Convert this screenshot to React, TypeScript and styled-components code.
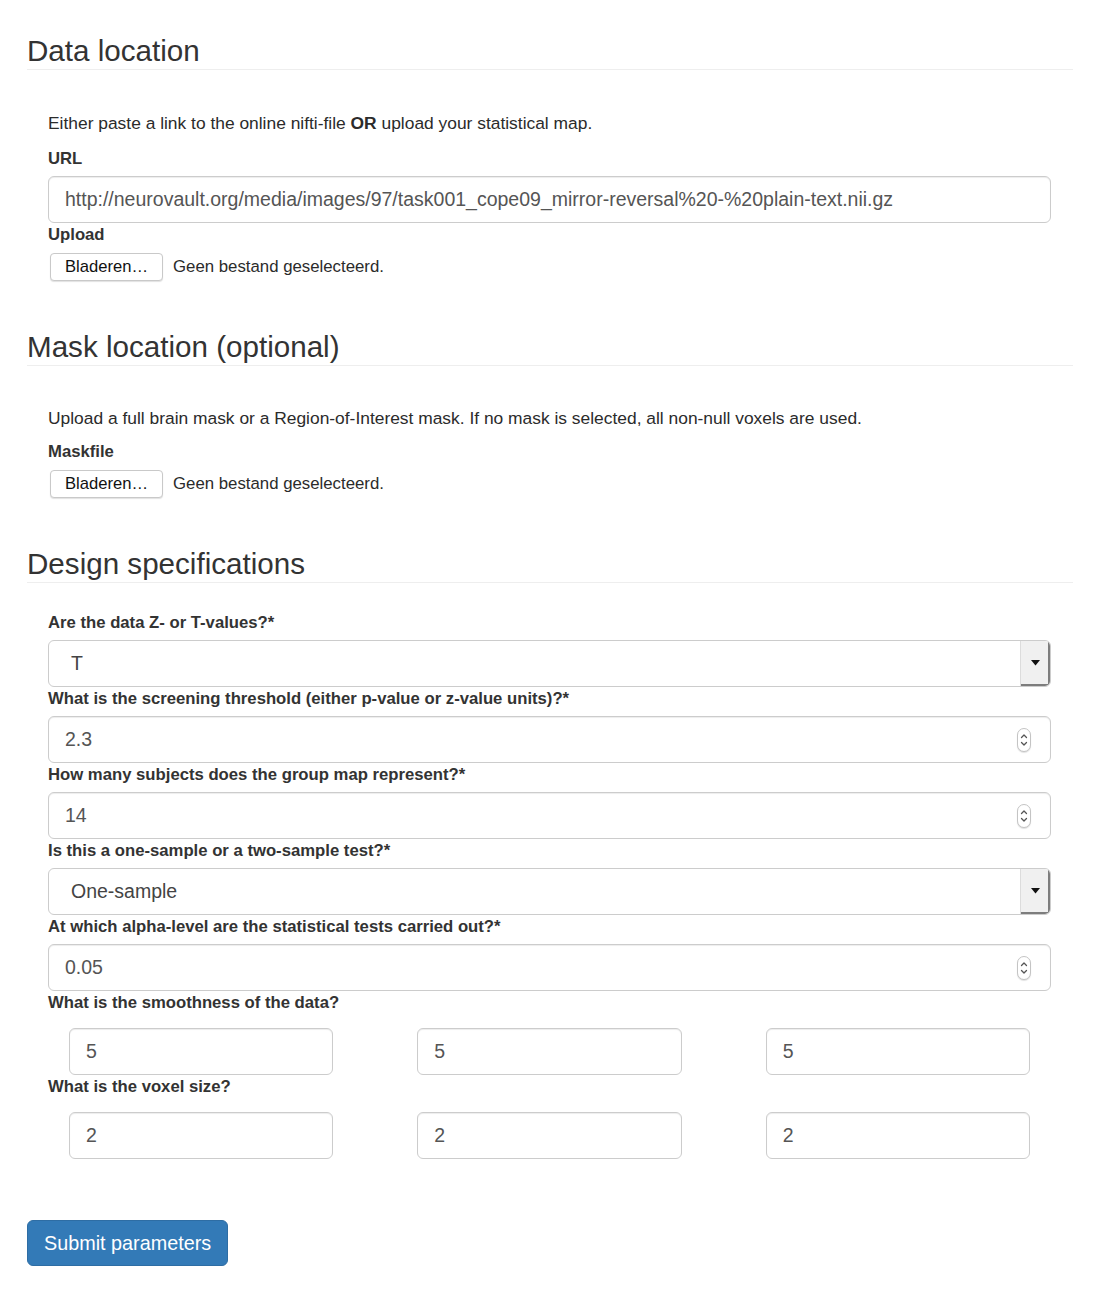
import React from "react";
import styled, { createGlobalStyle } from "styled-components";

const GlobalStyle = createGlobalStyle`
  html, body {
    margin: 0;
    padding: 0;
    background: #ffffff;
  }
  body {
    font-family: "Liberation Sans", Arial, Helvetica, sans-serif;
    color: #333333;
  }
  * { box-sizing: border-box; }
`;

const Page = styled.div`
  padding: 34px 32px 50px 27px;
`;

const Section = styled.section<{ $first?: boolean }>`
  margin-top: ${(p) => (p.$first ? "0" : "47px")};
`;

const SectionTitle = styled.h2`
  margin: 0;
  font-size: 29.6px;
  font-weight: 400;
  line-height: 33px;
  color: #333333;
  padding-bottom: 2px;
  border-bottom: 1px solid #eeeeee;
`;

const FormBody = styled.div<{ $top: number }>`
  padding: ${(p) => p.$top}px 22px 0 21px;
`;

const Intro = styled.p<{ $after: number }>`
  margin: 14px 0 ${(p) => p.$after}px;
  font-size: 17.4px;
  line-height: 22px;
  color: #2b2b2b;
  strong { font-weight: 700; }
`;

const FieldLabel = styled.label`
  display: block;
  margin: 0 0 7px;
  font-size: 16.7px;
  line-height: 21px;
  font-weight: 700;
  color: #333333;
`;

const TextInput = styled.input`
  display: block;
  width: 100%;
  height: 47px;
  margin: 0 0 1px;
  padding: 0 16px;
  font-family: "Liberation Sans", Arial, sans-serif;
  font-size: 19.5px;
  color: #555555;
  background: #ffffff;
  border: 1px solid #cccccc;
  border-radius: 6px;
  box-shadow: inset 0 1px 1px rgba(0, 0, 0, 0.075);
  outline: none;
`;

const FileRow = styled.div`
  display: flex;
  align-items: center;
  gap: 10px;
  padding: 1px 0 2px 2px;
`;

const FileButton = styled.button`
  height: 28px;
  padding: 0 14px;
  font-family: "Liberation Sans", Arial, sans-serif;
  font-size: 16.6px;
  color: #111111;
  background: #ffffff;
  border: 1px solid #c9c9c9;
  border-radius: 4px;
  box-shadow: 0 1px 1px rgba(0, 0, 0, 0.12);
`;

const FileStatus = styled.span`
  font-size: 16.8px;
  color: #2b2b2b;
`;

const SelectBox = styled.div`
  display: flex;
  height: 47px;
  margin: 0 0 1px;
  background: #ffffff;
  border: 1px solid #cccccc;
  border-radius: 6px;
  overflow: hidden;
`;

const SelectValue = styled.div`
  flex: 1;
  display: flex;
  align-items: center;
  padding-left: 22px;
  font-size: 19.5px;
  color: #444444;
`;

const SelectArrow = styled.div`
  width: 30px;
  display: flex;
  align-items: center;
  justify-content: center;
  background: #f0f0f0;
  border-left: 1px solid #dcdcdc;
  box-shadow: inset -2px -2px 0 #7d7d7d;
`;

const NumberWrap = styled.div`
  position: relative;
`;

const Spinner = styled.span`
  position: absolute;
  right: 20px;
  top: 50%;
  transform: translateY(-50%);
  width: 14px;
  height: 24px;
  border: 1px solid #c4c4c4;
  border-radius: 7px;
  background: #ffffff;
  box-shadow: 0 1px 1px rgba(0, 0, 0, 0.12);
  display: flex;
  align-items: center;
  justify-content: center;
`;

const TripleRow = styled.div`
  display: grid;
  grid-template-columns: repeat(3, 1fr);
  gap: 84px;
  padding: 8px 21px 0;
`;

const SubmitButton = styled.button`
  margin-top: 60px;
  height: 46px;
  padding: 0 16px;
  font-family: "Liberation Sans", Arial, sans-serif;
  font-size: 19.8px;
  color: #ffffff;
  background: #337ab7;
  border: 1px solid #2e6da4;
  border-radius: 6px;
`;

const SpinnerIcon = () => (
  <svg width="10" height="20" viewBox="0 0 10 20" aria-hidden="true">
    <path d="M2.5 7.5 L5 5 L7.5 7.5" fill="none" stroke="#555" strokeWidth="1.3" strokeLinecap="round" strokeLinejoin="round" />
    <path d="M2.5 12.5 L5 15 L7.5 12.5" fill="none" stroke="#555" strokeWidth="1.3" strokeLinecap="round" strokeLinejoin="round" />
  </svg>
);

const Caret = () => (
  <svg width="9" height="6" viewBox="0 0 9 6" aria-hidden="true" style={{ marginTop: -2 }}>
    <path d="M0 0 H9 L4.5 5.5 Z" fill="#111" />
  </svg>
);

const Select = ({ value }: { value: string }) => (
  <SelectBox>
    <SelectValue>{value}</SelectValue>
    <SelectArrow>
      <Caret />
    </SelectArrow>
  </SelectBox>
);

const NumberField = ({ value }: { value: string }) => (
  <NumberWrap>
    <TextInput type="text" defaultValue={value} readOnly />
    <Spinner>
      <SpinnerIcon />
    </Spinner>
  </NumberWrap>
);

const FileField = () => (
  <FileRow>
    <FileButton type="button">Bladeren…</FileButton>
    <FileStatus>Geen bestand geselecteerd.</FileStatus>
  </FileRow>
);

export default function App() {
  return (
    <>
      <GlobalStyle />
      <Page>
        <Section $first>
          <SectionTitle>Data location</SectionTitle>
          <FormBody $top={28}>
            <Intro $after={14}>
              Either paste a link to the online nifti-file <strong>OR</strong> upload your statistical map.
            </Intro>
            <FieldLabel>URL</FieldLabel>
            <TextInput
              type="text"
              readOnly
              defaultValue="http://neurovault.org/media/images/97/task001_cope09_mirror-reversal%20-%20plain-text.nii.gz"
            />
            <FieldLabel>Upload</FieldLabel>
            <FileField />
          </FormBody>
        </Section>

        <Section>
          <SectionTitle>Mask location (optional)</SectionTitle>
          <FormBody $top={27}>
            <Intro $after={12}>
              Upload a full brain mask or a Region-of-Interest mask. If no mask is selected, all non-null voxels are used.
            </Intro>
            <FieldLabel>Maskfile</FieldLabel>
            <FileField />
          </FormBody>
        </Section>

        <Section>
          <SectionTitle>Design specifications</SectionTitle>
          <FormBody $top={29}>
            <FieldLabel>Are the data Z- or T-values?*</FieldLabel>
            <Select value="T" />
            <FieldLabel>What is the screening threshold (either p-value or z-value units)?*</FieldLabel>
            <NumberField value="2.3" />
            <FieldLabel>How many subjects does the group map represent?*</FieldLabel>
            <NumberField value="14" />
            <FieldLabel>Is this a one-sample or a two-sample test?*</FieldLabel>
            <Select value="One-sample" />
            <FieldLabel>At which alpha-level are the statistical tests carried out?*</FieldLabel>
            <NumberField value="0.05" />
            <FieldLabel>What is the smoothness of the data?</FieldLabel>
            <TripleRow>
              <TextInput type="text" readOnly defaultValue="5" />
              <TextInput type="text" readOnly defaultValue="5" />
              <TextInput type="text" readOnly defaultValue="5" />
            </TripleRow>
            <FieldLabel>What is the voxel size?</FieldLabel>
            <TripleRow>
              <TextInput type="text" readOnly defaultValue="2" />
              <TextInput type="text" readOnly defaultValue="2" />
              <TextInput type="text" readOnly defaultValue="2" />
            </TripleRow>
          </FormBody>
        </Section>

        <SubmitButton type="button">Submit parameters</SubmitButton>
      </Page>
    </>
  );
}
